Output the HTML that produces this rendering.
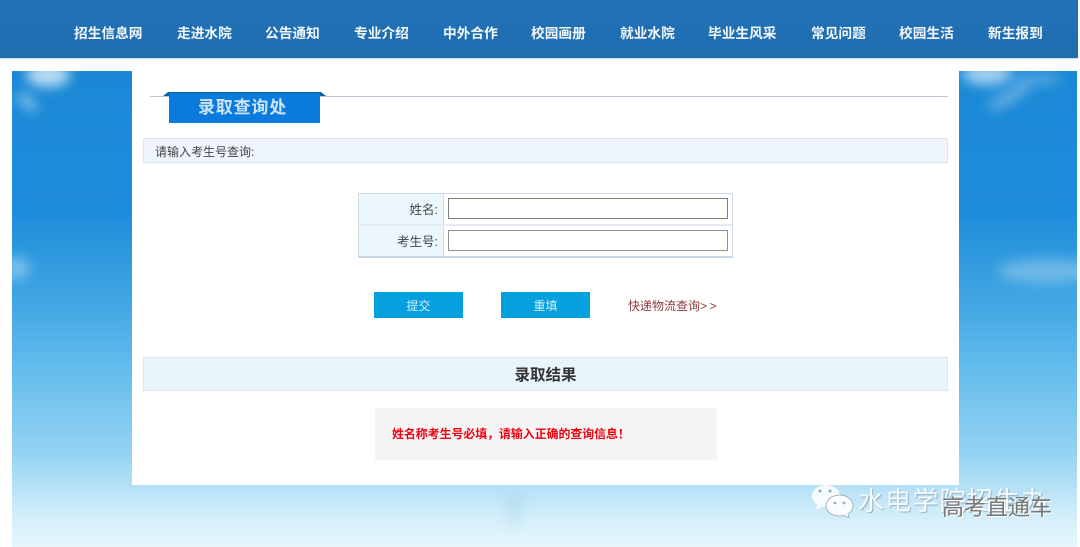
<!DOCTYPE html>
<html lang="zh"><head><meta charset="utf-8"><style>
*{box-sizing:border-box}
html,body{margin:0;padding:0}
body{width:1080px;height:547px;position:relative;overflow:hidden;background:#fff;font-family:"Liberation Sans","Noto Sans CJK SC",sans-serif;color:#333}
.a{position:absolute;white-space:nowrap}
#nav{left:0;top:0;width:1078px;height:58px;background:linear-gradient(#2272b8 0,#1f6dae 100%);box-shadow:0 1px 1px #bcd6ea}
.n{position:absolute;top:25px;height:18px;line-height:18px;font-size:13.7px;font-weight:bold;color:#f2f7fb;white-space:nowrap}
#sky{left:12px;top:71px;width:1065px;height:476px;overflow:hidden;background:linear-gradient(#1a88d6 0,#1e8dd9 30%,#44a8e4 50%,#62bcec 62%,#93d2f2 80%,#b8e2f6 88%,#d5effa 94%,#e6f6fc 100%)}
.c{position:absolute;background:#fff;border-radius:50%;filter:blur(6px)}
#panel{left:132px;top:71px;width:827px;height:414px;background:#fff}
.bar{position:absolute;left:143px;width:805px;border:1px solid #dde6f0}
</style></head><body>
<div class="a" id="sky">
<div class="c" style="left:14px;top:-8px;width:44px;height:24px;opacity:.7"></div>
<div class="c" style="left:2px;top:26px;width:26px;height:10px;opacity:.5;transform:rotate(40deg)"></div>
<div class="c" style="left:-10px;top:186px;width:28px;height:22px;opacity:.35"></div>
<div class="c" style="left:950px;top:-8px;width:50px;height:22px;opacity:.6"></div>
<div class="c" style="left:1000px;top:2px;width:50px;height:12px;opacity:.25"></div>
<div class="c" style="left:972px;top:20px;width:50px;height:12px;opacity:.35;transform:rotate(-30deg)"></div>
<div class="c" style="left:985px;top:188px;width:100px;height:24px;opacity:.28"></div>
<div class="c" style="left:495px;top:420px;width:14px;height:36px;background:#8cc6dc;opacity:.3"></div>
</div>
<div class="a" id="panel"></div>
<div class="a" id="nav"></div>
<div class="n" style="left:74px">招生信息网</div>
<div class="n" style="left:177px">走进水院</div>
<div class="n" style="left:265px">公告通知</div>
<div class="n" style="left:354px">专业介绍</div>
<div class="n" style="left:443px">中外合作</div>
<div class="n" style="left:531px">校园画册</div>
<div class="n" style="left:620px">就业水院</div>
<div class="n" style="left:708px">毕业生风采</div>
<div class="n" style="left:811px">常见问题</div>
<div class="n" style="left:899px">校园生活</div>
<div class="n" style="left:988px">新生报到</div>

<div class="a" style="left:150px;top:96px;width:798px;height:1px;background:#bcc6d6"></div>
<svg class="a" style="left:162px;top:91px" width="165" height="6"><path d="M1 5L6 1H159L164 5Z" fill="#0f5f9e"/></svg>
<div class="a" style="left:169px;top:93px;width:151px;height:30px;background:#0a7bdc;color:#cfe3f5;font-size:17px;font-weight:bold;line-height:29px;letter-spacing:.8px;padding-left:29px">录取查询处</div>

<div class="bar" style="top:138px;height:25px;background:#eff5fc;font-size:12px;line-height:27px;padding-left:11px;color:#444">请输入考生号查询:</div>

<div class="a" style="left:358px;top:193px;width:375px;height:65px;border:1px solid #cfdbe8;border-bottom:2px solid #c8d6e6;background:#fff"></div>
<div class="a" style="left:359px;top:194px;width:84px;height:30px;background:#ecf6fd"></div>
<div class="a" style="left:359px;top:226px;width:84px;height:30px;background:#ecf6fd"></div>
<div class="a" style="left:443px;top:194px;width:1px;height:62px;background:#cfdbe8"></div>
<div class="a" style="left:359px;top:224px;width:373px;height:2px;background:#e4ebf3"></div>
<div class="a" style="left:359px;top:201px;width:79px;text-align:right;font-size:12.5px;line-height:18px;color:#444">姓名:</div>
<div class="a" style="left:359px;top:233px;width:79px;text-align:right;font-size:12.5px;line-height:18px;color:#444">考生号:</div>
<div class="a" style="left:448px;top:198px;width:280px;height:21px;border:1px solid #7f7f7f;background:#fff"></div>
<div class="a" style="left:448px;top:230px;width:280px;height:21px;border:1px solid #929292;background:#fff"></div>

<div class="a" style="left:374px;top:292px;width:89px;height:26px;background:#05a0de;color:#d8f0fa;font-size:12px;line-height:28px;text-align:center">提交</div>
<div class="a" style="left:501px;top:292px;width:89px;height:26px;background:#05a0de;color:#d8f0fa;font-size:12px;line-height:28px;text-align:center">重填</div>
<div class="a" style="left:628px;top:297px;font-size:12px;line-height:18px;color:#8e3a3e">快递物流查询<span style="letter-spacing:-.4px">&gt; &gt;</span></div>

<div class="bar" style="top:357px;height:34px;background:#e9f5fd;font-size:15.5px;font-weight:bold;line-height:36px;text-align:center;color:#333">录取结果</div>
<div class="a" style="left:375px;top:408px;width:342px;height:52px;background:#f5f5f5;color:#f00010;font-size:11.9px;font-weight:bold;line-height:53px;padding-left:17px">姓名称考生号必填，请输入正确的查询信息！</div>

<svg class="a" style="left:810px;top:484px" width="46" height="34" viewBox="0 0 46 34">
<ellipse cx="16" cy="12" rx="14" ry="11" fill="#fff" opacity=".85"/>
<path d="M8 20l-3 6 7-3z" fill="#fff" opacity=".85"/>
<path d="M30 11c-8 0-14 5-14 11s6 10 14 10c2 0 3 0 4-.5l5 2.5-1-4c3-2 5-5 5-8 0-6-6-11-13-11z" fill="#fff" fill-opacity=".9" stroke="#9fb4be"/>
<circle cx="10" cy="7" r="1.5" fill="#9aa"/><circle cx="20" cy="7" r="1.5" fill="#9aa"/>
<circle cx="25" cy="19" r="1.4" fill="#9aa"/><circle cx="34" cy="19" r="1.4" fill="#9aa"/>
</svg>
<div class="a" style="left:858px;top:486px;font-size:26px;line-height:30px;color:#fff;opacity:.85;letter-spacing:1.2px;text-shadow:1px 1px 1px #8aa6b6">水电学院招生办</div>
<div class="a" style="left:942px;top:496px;font-size:22px;line-height:24px;color:#777;text-shadow:1px 1px 0 #fff">高考直通车</div>
</body></html>
